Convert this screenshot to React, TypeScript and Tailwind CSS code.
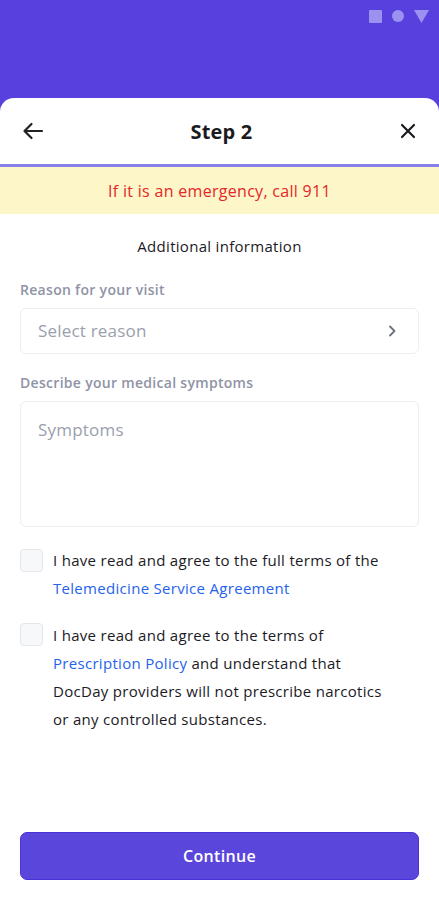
import React from "react";

export default function App() {
  return (
    <div
      className="w-[439px] h-[900px] bg-[#5840de] flex flex-col overflow-hidden"
      style={{ fontFamily: '"Open Sans", "Noto Sans", sans-serif' }}
    >
      {/* status bar */}
      <div className="h-[98px] flex justify-end items-start pt-[9px] pr-[10px] gap-[10px]">
        <div className="w-[13px] h-[13px] bg-[#9b91f0] rounded-[1px] mt-[1px]" />
        <div className="w-[12px] h-[12px] bg-[#9b91f0] rounded-full mt-[1px]" />
        <svg width="15" height="13" viewBox="0 0 15 13" className="mt-[1px]">
          <polygon points="0,0 15,0 7.5,13" fill="#9b91f0" />
        </svg>
      </div>

      {/* sheet */}
      <div className="flex-1 bg-white rounded-t-[14px] flex flex-col">
        {/* header */}
        <div className="h-[69px] flex items-center justify-between px-[22px] border-b-[3px] border-[#8a7fe6]">
          <svg width="22" height="18" viewBox="0 0 22 18" fill="none" stroke="#222" strokeWidth="2.2" strokeLinecap="round" strokeLinejoin="round">
            <path d="M20 9H2.5M9.5 2L2.5 9l7 7" />
          </svg>
          <div className="text-[20px] font-bold text-[#1b1b1f] tracking-[0.2px] pt-[2px]">Step 2</div>
          <svg width="18" height="18" viewBox="0 0 18 18" fill="none" stroke="#1b1b1f" strokeWidth="2.2" strokeLinecap="round">
            <path d="M3 3l12 12M15 3L3 15" />
          </svg>
        </div>

        {/* emergency banner */}
        <div className="h-[47px] bg-[#fdf6c8] flex items-center justify-center">
          <span className="text-[16px] font-medium tracking-[0.3px] text-[#e5262b]">If it is an emergency, call 911</span>
        </div>

        {/* content */}
        <div className="flex flex-col px-[20px] flex-1">
          <div className="text-center text-[15px] font-medium tracking-[0.3px] text-[#1b1b1f] mt-[21px]">Additional information</div>

          <div className="text-[14px] font-semibold tracking-[0.3px] text-[#8f93a6] mt-[21px]">Reason for your visit</div>
          <div className="mt-[8px] h-[46px] border border-[#eceef2] rounded-[6px] flex items-center justify-between pl-[17px] pr-[22px]">
            <span className="text-[17px] tracking-[0.2px] text-[#9aa0ad]">Select reason</span>
            <svg width="8" height="12" viewBox="0 0 8 12" fill="none" stroke="#6b7080" strokeWidth="1.8" strokeLinecap="round" strokeLinejoin="round">
              <path d="M2 1.5L6.5 6 2 10.5" />
            </svg>
          </div>

          <div className="text-[14px] font-semibold tracking-[0.3px] text-[#8f93a6] mt-[18px]">Describe your medical symptoms</div>
          <div className="mt-[8px] h-[126px] border border-[#eceef2] rounded-[6px] pl-[17px] pt-[15px]">
            <span className="text-[17px] tracking-[0.2px] text-[#9aa0ad]">Symptoms</span>
          </div>

          <div className="flex mt-[22px] gap-[10px]">
            <div className="w-[23px] h-[23px] shrink-0 border-[1.5px] border-[#e4e6ec] bg-[#f7f8fa] rounded-[4px]" />
            <div className="text-[15px] font-medium tracking-[0.3px] leading-[28px] text-[#1b1b1f] -mt-[3px]">
              I have read and agree to the full terms of the
              <br />
              <span className="text-[#2563eb]">Telemedicine Service Agreement</span>
            </div>
          </div>

          <div className="flex mt-[21px] gap-[10px]">
            <div className="w-[23px] h-[23px] shrink-0 border-[1.5px] border-[#e4e6ec] bg-[#f7f8fa] rounded-[4px]" />
            <div className="text-[15px] font-medium tracking-[0.3px] leading-[28px] text-[#1b1b1f] -mt-[2px]">
              I have read and agree to the terms of
              <br />
              <span className="text-[#2563eb]">Prescription Policy</span> and understand that
              <br />
              DocDay providers will not prescribe narcotics
              <br />
              or any controlled substances.
            </div>
          </div>

          <div className="flex-1" />
          <button className="h-[48px] mb-[20px] bg-[#5b46dc] border border-[#4a33d6] rounded-[7px] text-white text-[16px] font-semibold tracking-[0.3px]">
            Continue
          </button>
        </div>
      </div>
    </div>
  );
}
